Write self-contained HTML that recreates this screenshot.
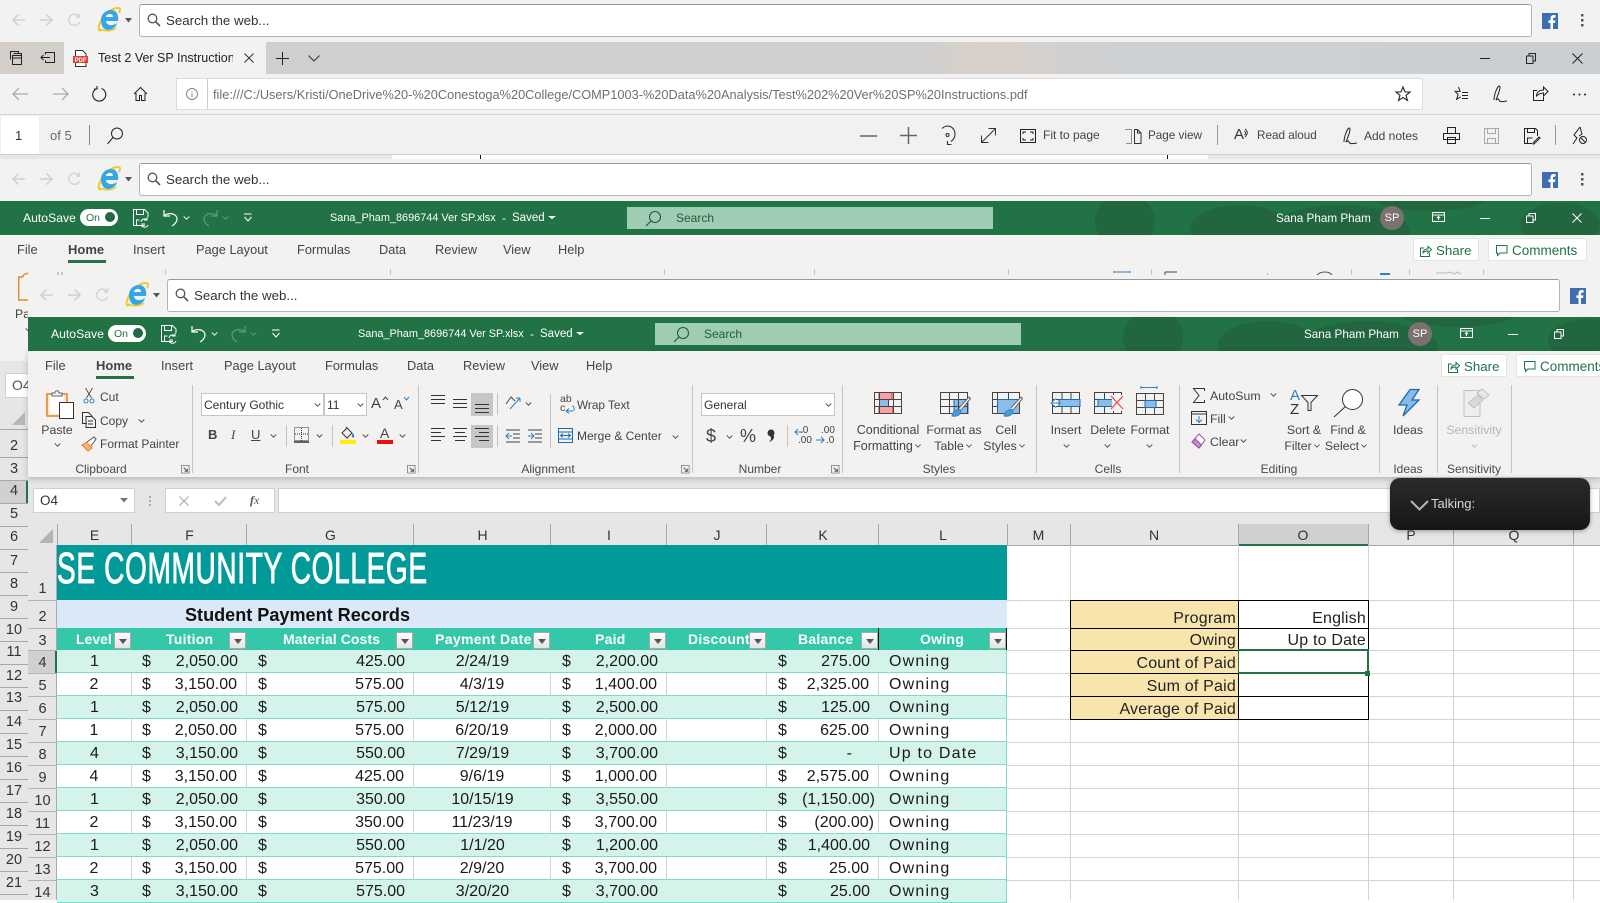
<!DOCTYPE html>
<html lang="en"><head><meta charset="utf-8"><title>Excel</title>
<style>
html,body{margin:0;padding:0;width:1600px;height:900px;overflow:hidden;background:#fff;font-family:"Liberation Sans",sans-serif}
div,span,svg{box-sizing:border-box}
.a{position:absolute}
.t{position:absolute;white-space:nowrap;line-height:20px;height:20px;font-size:12px;color:#444}
.c{transform:translateX(-50%)}
.i{position:absolute;overflow:visible;fill:none;stroke:#444;stroke-width:1}
.w{color:#fff}
.rl{font-size:12.3px}
.g{font-size:12px;color:#4a4a4a}
.ie{position:absolute;height:42px;background:#f2f2f2}
.box{position:absolute;left:139px;top:4px;width:1393px;height:33px;background:#fff;border:1px solid #b4b4b4;border-top-color:#999;border-radius:3px}
.bar{position:absolute;height:34px;background:#217346}
.tab{position:absolute;top:39px;font-size:12.800px;color:#444;line-height:20px;white-space:nowrap}
.btn{position:absolute;top:37px;height:23px;background:#fff;border:1px solid #e4e4e4;border-radius:2px}
.sb{position:absolute;left:627px;top:6px;width:366px;height:22px;background:#9fcdb3}
.div{position:absolute;top:385px;height:88px;width:1px;background:#c4c4c4}
.sm{position:absolute;width:1px;background:#c4c4c4}
.tb{position:absolute;top:650px;left:57px;border-collapse:separate;border-spacing:0;table-layout:fixed;width:950px;font-size:16px;color:#1a1a1a}
.tb td{height:23px;padding:1.5px 0 0;border-bottom:1.5px solid #7fdcc6;position:relative;overflow:hidden;white-space:nowrap;box-sizing:border-box;line-height:20px}
.tb tr.s td{background:#d4f3eb}
.tb tr.n td{border-right:1px solid #d4d4d4}
.tb td:last-child{border-right:1px solid #7fdcc6!important;padding-left:10px;letter-spacing:1.2px}
.tb i{font-style:normal;position:absolute;top:1.5px}
.f i{left:10px}.f{text-align:right;padding-right:9px!important}
.tb td:nth-child(3) i{left:11px}
.k i{left:11px}.k{text-align:right;padding-right:9px!important}
.m{text-align:center}
.hdr{position:absolute;top:628px;height:22px;line-height:22px;font-size:14px;font-weight:bold;color:#fff;white-space:nowrap;letter-spacing:.25px}
.fb{position:absolute;top:632px;width:17px;height:17px;background:linear-gradient(#fdfdfd,#e4e4e4);border:1px solid #a9a9a9}
.fb:after{content:"";position:absolute;left:4px;top:6px;border:4px solid transparent;border-top:5px solid #555;border-bottom:0}
.col{position:absolute;top:525px;height:20px;line-height:20px;font-size:14px;color:#333;text-align:center}
.rn{position:absolute;font-size:14.5px;line-height:20px;height:20px;text-align:center;color:#333}
.pv{position:absolute;left:1070px;top:600px;border-collapse:collapse;table-layout:fixed;width:298px;font-size:16px;color:#222}
.pv td{border:1px solid #000;padding:0 2px 0 0;text-align:right;vertical-align:bottom;box-sizing:border-box;letter-spacing:.2px;line-height:19px}
.pv td:first-child{background:#f8e5ae}
</style></head><body>
<svg width="0" height="0" style="position:absolute">
<symbol id="iel" viewBox="0 0 24 26"><path d="M4 23C1 25 1 21 3 16 6 8 14 1 21 1c3 0 2 3 1 5" fill="none" stroke="#f2c92c" stroke-width="2"/><path d="M4 13c0-6 5-10 10-10 6 0 8 6 7 11H9c0 4 6 6 11 2-1 5-6 7-9 7-5 0-7-5-7-10z" fill="#35a7e6"/><path d="M9 10h7c0-2-1-3-3-3-2 0-4 1-4 3z" fill="#fff"/><path d="M3 22c4 2 11 3 16-1" fill="none" stroke="#f2c92c" stroke-width="1.600"/></symbol>
<symbol id="fb" viewBox="0 0 16 16"><rect width="16" height="16" fill="#3f6eb0"/><path d="M11 16v-6h2l.4-2.600H11V6c0-1 .4-1.400 1.400-1.400h1.200V2.200C13 2 12.300 2 11.700 2 9.800 2 8.500 3.200 8.500 5.400v2H6.400V10h2.100v6z" fill="#fff"/></symbol>
<symbol id="ch" viewBox="0 0 8 5"><path d="M.5.500L4 4 7.500.5" fill="none" stroke="#444" stroke-width="1.100"/></symbol>
<symbol id="chw" viewBox="0 0 8 5"><path d="M.5.500L4 4 7.500.5" fill="none" stroke="#fff" stroke-width="1.100"/></symbol>
<symbol id="chf" viewBox="0 0 8 5"><path d="M.5.500L4 4 7.500.5" fill="none" stroke="#5d9c7a" stroke-width="1.100"/></symbol>
<symbol id="chg" viewBox="0 0 8 5"><path d="M.5.500L4 4 7.500.5" fill="none" stroke="#b5b5b5" stroke-width="1.100"/></symbol>
<symbol id="lau" viewBox="0 0 10 10"><path d="M.5 9V.5h8.500V9H.5" fill="none" stroke="#888"/><path d="M3 3l4 4M7 4v3H4" fill="none" stroke="#444"/></symbol>
<symbol id="sr" viewBox="0 0 14 14"><circle cx="5.500" cy="5.500" r="4.300" fill="none" stroke="#555" stroke-width="1.300"/><path d="M8.800 8.800L13 13" stroke="#555" stroke-width="1.600"/></symbol>
<symbol id="mg" viewBox="0 0 18 18"><circle cx="11" cy="7" r="5.500" fill="none" stroke="#1e5c3a" stroke-width="1.100"/><path d="M7 11L2 16" stroke="#1e5c3a" stroke-width="1.200"/></symbol>
</svg>

<!-- IE bar 1 -->
<div class="ie" style="left:0;top:0;width:1600px">
<svg class="i" style="left:11px;top:13px;stroke:#cfcfcf;stroke-width:1.500" width="15" height="14"><path d="M14 7H2M7.500 1.500L2 7l5.500 5.500"/></svg>
<svg class="i" style="left:39px;top:13px;stroke:#cfcfcf;stroke-width:1.500" width="15" height="14"><path d="M1 7h12M7.500 1.500L13 7l-5.500 5.500"/></svg>
<svg class="i" style="left:67px;top:13px;stroke:#d4d4d4;stroke-width:1.500" width="15" height="14"><path d="M12.500 9A5.600 5.600 0 1 1 11.500 3M12.500 .5v3.500H9"/></svg>
<svg class="i" style="left:97px;top:7px;stroke:none" width="24" height="26"><use href="#iel"/></svg>
<svg class="i" style="left:125px;top:18px;stroke:none;fill:#555" width="7" height="5"><path d="M0 0h7L3.500 4.500z"/></svg>
<div class="box"></div>
<svg class="i" style="left:147px;top:13px;stroke:none" width="14" height="14"><use href="#sr"/></svg>
<div class="t" style="left:166px;top:11px;font-size:13.300px;color:#333">Search the web...</div>
<svg class="i" style="left:1542px;top:13px;stroke:none" width="16" height="16"><use href="#fb"/></svg>
<svg class="i" style="left:1581px;top:14px;stroke:none;fill:#555" width="3" height="14"><rect width="2.500" height="2.500"/><rect y="5" width="2.500" height="2.500"/><rect y="10" width="2.500" height="2.500"/></svg>
</div>

<!-- Edge tab strip -->
<div class="a" style="left:0;top:42px;width:1600px;height:32px;background:linear-gradient(90deg,#d3cec9 0,#cfcfd0 300px,#cdcfd1 900px,#d9d0c9 985px,#cdd0d3 1120px,#cccfd1 100%)"></div>
<div class="a" style="left:64px;top:42px;width:202px;height:32px;background:#f2f2f2"></div>
<svg class="i" style="left:9px;top:50px;stroke:#222" width="15" height="16"><path d="M1.500 9.500V1.500h8v2M4.500 3.500h8v2M3.500 5.500h9v9h-9zM3.500 8h9"/></svg>
<svg class="i" style="left:40px;top:51px;stroke:#222" width="16" height="14"><path d="M5.500 3.500v-2h9v10h-9v-2M1 6.500h9M3.500 4L1 6.500 3.500 9"/></svg>
<svg class="i" style="left:73px;top:50px" width="15" height="17"><path d="M2.500.5h7l3.500 3.500v12.500h-10.500z" fill="#fff" stroke="#333"/><rect x="0" y="6" width="15" height="7" fill="#e04030" stroke="none"/><text x="1.500" y="11.800" font-size="6" font-weight="bold" fill="#fff" stroke="none" font-family="Liberation Sans">PDF</text></svg>
<div class="t" style="left:98px;top:48px;font-size:12.500px;color:#222;width:135px;overflow:hidden">Test 2 Ver SP Instruction</div>
<svg class="i" style="left:244px;top:53px;stroke:#333" width="10" height="10"><path d="M.5.500l9 9M9.500.5l-9 9"/></svg>
<svg class="i" style="left:276px;top:52px;stroke:#222" width="13" height="13"><path d="M6.500 0v13M0 6.500h13"/></svg>
<svg class="i" style="left:308px;top:55px;stroke:#333" width="12" height="7"><path d="M.5.500L6 6l5.500-5.500"/></svg>
<svg class="i" style="left:1480px;top:58px;stroke:#222" width="10" height="1"><path d="M0 .5h10"/></svg>
<svg class="i" style="left:1526px;top:53px;stroke:#222" width="10" height="11"><path d="M.5 3h6.500v7.500H.5zM3 3V.5h6.500V8H7"/></svg>
<svg class="i" style="left:1572px;top:53px;stroke:#222" width="11" height="11"><path d="M.5.500l10 10M10.500.5l-10 10"/></svg>

<!-- Edge address -->
<div class="a" style="left:0;top:74px;width:1600px;height:41px;background:#f2f2f2"></div>
<svg class="i" style="left:12px;top:87px;stroke:#9b9b9b" width="17" height="14"><path d="M16 7H1M7 1L1 7l6 6"/></svg>
<svg class="i" style="left:52px;top:87px;stroke:#9b9b9b" width="17" height="14"><path d="M1 7h15M10 1l6 6-6 6"/></svg>
<svg class="i" style="left:92px;top:86px;stroke:#222;stroke-width:1.100" width="15" height="16"><path d="M9.500 2.500A6.500 6.500 0 1 1 5 2.500M5 0v3H2"/></svg>
<svg class="i" style="left:133px;top:86px;stroke:#222" width="15" height="16"><path d="M1 8l6.500-6.500L14 8M3 7v7.500h3.500v-5h2v5H12V7"/></svg>
<div class="a" style="left:176px;top:78px;width:1247px;height:32px;background:#fff;border:1px solid #dcdcdc"></div>
<svg class="i" style="left:186px;top:88px;stroke:#888" width="12" height="12"><circle cx="6" cy="6" r="5.500"/><path d="M6 5v4M6 3v1"/></svg>
<div class="a" style="left:207px;top:79px;width:1px;height:30px;background:#ccc"></div>
<div class="t" style="left:213px;top:85px;font-size:12.770px;color:#6f6f6f">file:///C:/Users/Kristi/OneDrive%20-%20Conestoga%20College/COMP1003-%20Data%20Analysis/Test%202%20Ver%20SP%20Instructions.pdf</div>
<svg class="i" style="left:1395px;top:86px;stroke:#222;stroke-width:1.100" width="16" height="16"><path d="M8 1l2 5h5l-4 3.300 1.500 5.200L8 11.500 3.500 14.500 5 9.300 1 6h5z"/></svg>
<svg class="i" style="left:1452px;top:86px;stroke:#222" width="17" height="16"><path d="M6.500 1l1.600 4.400h-5l3 3-1.500 5 4-2.600M10 6.500h6M10 9.500h6M10 12.500h6"/></svg>
<svg class="i" style="left:1492px;top:85px;stroke:#222" width="17" height="18"><path d="M2 15c0-5 3-13 5-14 2 0 1 4-3 14M4 15c2-1 2-2 3 0s2 2 8 1"/></svg>
<svg class="i" style="left:1532px;top:85px;stroke:#222" width="17" height="17"><path d="M5 5.500H1.500v10h10V12M4.500 11c0-4 3-6 7-6V2L16 6.500 11.500 11V8c-3 0-5 1-7 3z"/></svg>
<svg class="i" style="left:1572px;top:93px;stroke:none;fill:#222" width="15" height="3"><circle cx="2" cy="1.500" r="1"/><circle cx="7.500" cy="1.500" r="1"/><circle cx="13" cy="1.500" r="1"/></svg>

<!-- PDF toolbar -->
<div class="a" style="left:0;top:114px;width:1600px;height:41px;background:#f1f1f1;border-top:1px solid #d4d4d4;border-bottom:1px solid #cfcfcf"></div>
<div class="a" style="left:1px;top:116px;width:38px;height:38px;background:#fff"></div>
<div class="t" style="left:15px;top:126px;font-size:13px;color:#333">1</div>
<div class="t" style="left:50px;top:126px;font-size:13px;color:#666">of 5</div>
<div class="a" style="left:89px;top:125px;width:1px;height:20px;background:#888"></div>
<svg class="i" style="left:106px;top:127px;stroke:#222" width="18" height="18"><circle cx="11" cy="6.500" r="5.500"/><path d="M7 10.500L1.500 17"/></svg>
<svg class="i" style="left:860px;top:135px;stroke:#666;stroke-width:1.500" width="17" height="2"><path d="M0 1h17"/></svg>
<svg class="i" style="left:900px;top:127px;stroke:#666;stroke-width:1.500" width="17" height="17"><path d="M0 8.500h17M8.500 0v17"/></svg>
<svg class="i" style="left:939px;top:126px;stroke:#333;stroke-width:1.100" width="18" height="19"><path d="M3 2.500A7.500 7.500 0 0 1 16 8c0 4-2 6-4 7.500M8.500 15v3.500h4"/><circle cx="8.500" cy="9" r="1.500"/></svg>
<svg class="i" style="left:980px;top:127px;stroke:#333" width="17" height="17"><path d="M1.500 15.500l14-14M8.500 1.500h7v7M1.500 8.500v7h7"/></svg>
<svg class="i" style="left:1020px;top:129px;stroke:#222" width="16" height="14"><path d="M.5.500h15v13H.5z"/><path d="M3 5V3h3M13 5V3h-3M3 9v2h3M13 9v2h-3"/></svg>
<div class="t" style="left:1043px;top:125px;font-size:12px">Fit to page</div>
<svg class="i" style="left:1125px;top:129px;stroke:#333" width="17" height="15"><path d="M.5.500h6v14h-6" stroke-dasharray="1 1"/><path d="M9.500.5h3l3.500 3.500v10.500H9.500zM12.500.5v3.500h3.500"/></svg>
<div class="t" style="left:1148px;top:126px;font-size:11.700px">Page view</div>
<div class="a" style="left:1217px;top:125px;width:1px;height:20px;background:#999"></div>
<div class="t" style="left:1234px;top:125px;font-size:15px;color:#333">A</div>
<svg class="i" style="left:1244px;top:128px;stroke:#333" width="6" height="10"><path d="M1 1c3 2 3 5 0 8M.5 3c1.500 1 1.500 3 0 4"/></svg>
<div class="t" style="left:1257px;top:126px;font-size:11.700px">Read aloud</div>
<svg class="i" style="left:1342px;top:127px;stroke:#222" width="17" height="18"><path d="M2 15c0-5 3-13 5-14 2 0 1 4-3 14M4 15c2-1 2-2 3 0s2 2 8 1"/></svg>
<div class="t" style="left:1364px;top:126px">Add notes</div>
<svg class="i" style="left:1443px;top:127px;stroke:#222" width="17" height="17"><path d="M4.500 6V.5h8V6M.5 6.500h16v6h-16zM4.500 10.500h8v6h-8z"/></svg>
<svg class="i" style="left:1484px;top:128px;stroke:#a9a9a9" width="15" height="16"><path d="M.5.500h14v15H.5zM3.500.5v5h8v-5M3.500 15.500v-5h8v5"/></svg>
<svg class="i" style="left:1524px;top:128px;stroke:#222" width="16" height="16"><path d="M8 15.500H.5V.5h11l2 2V8M3.500.5v4h7v-4M3.500 15v-5h5"/><path d="M9 15l6-6 1 1-6 6H9z"/></svg>
<div class="a" style="left:1555px;top:125px;width:1px;height:20px;background:#999"></div>
<svg class="i" style="left:1572px;top:126px;stroke:#222" width="16" height="19"><path d="M8 1l-6 8 3 3-4 6M8 1l2 7-3 2"/><circle cx="11" cy="14" r="3.500"/><path d="M9 12l4 4"/></svg>

<div class="a" style="left:0;top:155px;width:1600px;height:5px;background:#e6e6e6"></div>
<div class="a" style="left:392px;top:155px;width:816px;height:5px;background:#fff"></div>
<div class="a" style="left:480px;top:155px;width:1px;height:4px;background:#111"></div>
<div class="a" style="left:1167px;top:155px;width:1px;height:4px;background:#111"></div>

<!-- IE bar 2 -->
<div class="ie" style="left:0;top:159px;width:1600px">
<svg class="i" style="left:11px;top:13px;stroke:#cfcfcf;stroke-width:1.500" width="15" height="14"><path d="M14 7H2M7.500 1.500L2 7l5.500 5.500"/></svg>
<svg class="i" style="left:39px;top:13px;stroke:#cfcfcf;stroke-width:1.500" width="15" height="14"><path d="M1 7h12M7.500 1.500L13 7l-5.500 5.500"/></svg>
<svg class="i" style="left:67px;top:13px;stroke:#d4d4d4;stroke-width:1.500" width="15" height="14"><path d="M12.500 9A5.600 5.600 0 1 1 11.500 3M12.500 .5v3.500H9"/></svg>
<svg class="i" style="left:97px;top:7px;stroke:none" width="24" height="26"><use href="#iel"/></svg>
<svg class="i" style="left:125px;top:18px;stroke:none;fill:#555" width="7" height="5"><path d="M0 0h7L3.500 4.500z"/></svg>
<div class="box"></div>
<svg class="i" style="left:147px;top:13px;stroke:none" width="14" height="14"><use href="#sr"/></svg>
<div class="t" style="left:166px;top:11px;font-size:13.300px;color:#333">Search the web...</div>
<svg class="i" style="left:1542px;top:13px;stroke:none" width="16" height="16"><use href="#fb"/></svg>
<svg class="i" style="left:1581px;top:14px;stroke:none;fill:#555" width="3" height="14"><rect width="2.500" height="2.500"/><rect y="5" width="2.500" height="2.500"/><rect y="10" width="2.500" height="2.500"/></svg>
</div>

<!-- Back Excel -->
<div class="a" style="left:0;top:235px;width:1600px;height:40px;background:#f3f2f1"></div>
<div class="a" style="left:0;top:275px;width:28px;height:87px;background:#f3f2f1"></div>
<div class="bar" style="left:0;top:201px;width:1600px;overflow:hidden">
<svg class="a" style="left:1090px;top:0" width="510" height="34"><g fill="#21663f"><ellipse cx="35" cy="20" rx="30" ry="28"/><ellipse cx="150" cy="28" rx="50" ry="24"/><ellipse cx="250" cy="30" rx="70" ry="26"/><ellipse cx="340" cy="-6" rx="60" ry="16"/><ellipse cx="470" cy="24" rx="40" ry="22"/></g></svg>
<div class="t w" style="left:23px;top:7px;font-size:12.200px">AutoSave</div>
<div class="a" style="left:80px;top:8px;width:38px;height:17px;border-radius:9px;background:#fff"></div>
<div class="t" style="left:86px;top:7px;font-size:10.500px;color:#217346">On</div>
<div class="a" style="left:105px;top:11px;width:10px;height:10px;border-radius:5px;background:#1f6a41"></div>
<svg class="i" style="left:133px;top:8px;stroke:#fff" width="17" height="19"><path d="M12 16.500H.5V.5h11l3.500 3.500v4M3.500.5v5h7v-5M3.500 16v-5h3"/><path d="M8 13a3.500 3.500 0 0 1 6-2M15 16a3.500 3.500 0 0 1-6 1M14 8v3h-3M9 18v-3h3"/></svg>
<svg class="i" style="left:163px;top:8px;stroke:#fff;stroke-width:1.200" width="16" height="18"><path d="M1 1v6h6M1 7c3-4 13-3 13 3 0 3-3 6-5 7"/></svg>
<svg class="i" style="left:183px;top:15px;stroke:none" width="7" height="4"><use href="#chw"/></svg>
<svg class="i" style="left:202px;top:8px;stroke:#5d9c7a;stroke-width:1.200" width="16" height="18"><path d="M15 1v6H9M15 7C12 3 2 4 2 10c0 3 3 6 5 7"/></svg>
<svg class="i" style="left:222px;top:15px;stroke:none" width="7" height="4"><use href="#chf"/></svg>
<svg class="i" style="left:244px;top:12px;stroke:#fff" width="8" height="9"><path d="M0 1h7.500M.5 4L4 8l3.500-4"/></svg>
<div class="t w" style="left:330px;top:7px;font-size:10.900px">Sana_Pham_8696744 Ver SP.xlsx</div>
<div class="t w" style="left:502px;top:7px">-</div>
<div class="t w" style="left:512px;top:7px;font-size:11.500px">Saved</div>
<svg class="i" style="left:549px;top:15px;stroke:#fff;fill:#fff" width="6" height="3"><path d="M.5.500h5L3 2.500z"/></svg>
<div class="sb"></div>
<svg class="i" style="left:644px;top:9px;stroke:none" width="18" height="18"><use href="#mg"/></svg>
<div class="t" style="left:676px;top:7px;color:#1e5c3a">Search</div>
<div class="t w" style="left:1276px;top:8px;font-size:11.700px">Sana Pham Pham</div>
<div class="a" style="left:1380px;top:5px;width:24px;height:24px;border-radius:12px;background:#7b716f;color:#fff;font-size:11px;text-align:center;line-height:24px">SP</div>
<svg class="i" style="left:1432px;top:11px;stroke:#fff" width="13" height="10"><path d="M.5.500h12v9H.5zM.5 3h12M6.500 8V4.500M5 6l1.500-1.500L8 6"/></svg>
<svg class="i" style="left:1480px;top:17px;stroke:#fff" width="10" height="1"><path d="M0 .5h10"/></svg>
<svg class="i" style="left:1526px;top:12px;stroke:#fff" width="10" height="10"><path d="M.5 3h6.500v6.500H.5zM3 3V.5h6.500V7H7"/></svg>
<svg class="i" style="left:1572px;top:12px;stroke:#fff" width="10" height="10"><path d="M.5.500l9 9M9.500.5l-9 9"/></svg>
</div>
<div class="a" style="left:0;top:201px;width:1600px;height:74px">
<div class="tab" style="left:17px">File</div><div class="tab" style="left:68px;font-weight:bold;font-size:13px">Home</div><div class="a" style="left:68px;top:59px;width:38px;height:3px;background:#217346"></div>
<div class="tab" style="left:133px">Insert</div><div class="tab" style="left:196px">Page Layout</div><div class="tab" style="left:297px">Formulas</div><div class="tab" style="left:379px">Data</div><div class="tab" style="left:435px">Review</div><div class="tab" style="left:503px">View</div><div class="tab" style="left:558px">Help</div>
<div class="btn" style="left:1413px;width:66px"></div><div class="btn" style="left:1488px;width:99px"></div>
<svg class="i" style="left:1420px;top:44px;stroke:#217346" width="12" height="12"><path d="M4 3H.5v8.500h9V8M3 8c0-3 2-4 5-4V1.500l3.500 3L8 8V6C6 6 4 6.500 3 8z"/></svg>
<div class="t" style="left:1436px;top:40px;font-size:13.300px;color:#217346">Share</div>
<svg class="i" style="left:1496px;top:44px;stroke:#217346" width="12" height="12"><path d="M.5.500h10.500v7.500H4L1.500 10.500V8h-1z"/></svg>
<div class="t" style="left:1512px;top:40px;font-size:13.500px;color:#217346">Comments</div>
</div>
<!-- back ribbon remnants -->
<div class="sm" style="left:165px;top:269px;height:6px"></div><div class="sm" style="left:390px;top:269px;height:6px"></div><div class="sm" style="left:664px;top:269px;height:6px"></div><div class="sm" style="left:814px;top:269px;height:6px"></div><div class="sm" style="left:1008px;top:269px;height:6px"></div><div class="sm" style="left:1151px;top:269px;height:6px"></div><div class="sm" style="left:1351px;top:269px;height:6px"></div><div class="sm" style="left:1409px;top:269px;height:6px"></div><div class="sm" style="left:1483px;top:269px;height:6px"></div>
<svg class="i" style="left:0;top:0" width="1600" height="280"><path d="M1114 272h16M1114 271v2M1130 271v2" stroke="#2c82c9"/><path d="M1165 272h12M1165 272v3" stroke="#444"/><path d="M1267 274h1" stroke="#2c82c9"/><path d="M1317 275c4-4 12-4 15 0" stroke="#555"/><path d="M1380 274h10" stroke="#2c82c9" stroke-width="2"/><path d="M1436 273h10l5-1 3 2 3-2 4 2" stroke="#bbb"/><path d="M58 272v3M62 272v3" stroke="#999"/></svg>
<svg class="i" style="left:18px;top:273px;stroke:#e8862d;stroke-width:1.400" width="10" height="28"><path d="M10 27H.7V4H5M5 4c0-3 3-3 5-4" /></svg>
<div class="t rl" style="left:15px;top:304px;color:#444">Pa</div>
<svg class="i" style="left:25px;top:328px;stroke:none" width="7" height="4"><use href="#ch"/></svg>

<!-- left strip (back sheet) -->
<div class="a" style="left:0;top:361px;width:28px;height:539px;background:#e6e6e6"></div>
<div class="a" style="left:5px;top:373px;width:26px;height:25px;background:#fff;border:1px solid #d0d0d0"></div>
<div class="t" style="left:12px;top:375px;font-size:14px;color:#555">O4</div>
<svg class="i" style="left:12px;top:412px;stroke:none;fill:#b8b8b8" width="14" height="14"><path d="M13 0v13H0z"/></svg>
<div class="a" style="left:0;top:480px;width:28px;height:23px;background:#d0d0d0;border-right:2px solid #217346"></div>
<svg class="i" style="left:0;top:420px;stroke:#a8a8a8" width="28" height="480"><path d="M0 9.500h28M0 37.500h28M0 60.500h28M0 83.500h28M0 106.500h28M0 129.500h28M0 152.500h28M0 175.500h28M0 198.500h28M0 221.500h28M0 244.500h28M0 267.500h28M0 290.500h28M0 313.500h28M0 336.500h28M0 359.500h28M0 382.500h28M0 405.500h28M0 428.500h28M0 451.500h28M0 474.500h28"/></svg>
<div class="rn" style="left:0;width:28px;top:436px">2</div><div class="rn" style="left:0;width:28px;top:459px">3</div><div class="rn" style="left:0;width:28px;top:481px">4</div><div class="rn" style="left:0;width:28px;top:504px">5</div><div class="rn" style="left:0;width:28px;top:527px">6</div><div class="rn" style="left:0;width:28px;top:551px">7</div><div class="rn" style="left:0;width:28px;top:574px">8</div><div class="rn" style="left:0;width:28px;top:597px">9</div><div class="rn" style="left:0;width:28px;top:620px">10</div><div class="rn" style="left:0;width:28px;top:642px">11</div><div class="rn" style="left:0;width:28px;top:666px">12</div><div class="rn" style="left:0;width:28px;top:688px">13</div><div class="rn" style="left:0;width:28px;top:712px">14</div><div class="rn" style="left:0;width:28px;top:735px">15</div><div class="rn" style="left:0;width:28px;top:758px">16</div><div class="rn" style="left:0;width:28px;top:781px">17</div><div class="rn" style="left:0;width:28px;top:804px">18</div><div class="rn" style="left:0;width:28px;top:827px">19</div><div class="rn" style="left:0;width:28px;top:850px">20</div><div class="rn" style="left:0;width:28px;top:873px">21</div>

<!-- IE bar 3 -->
<div class="ie" style="left:28px;top:275px;width:1572px">
<svg class="i" style="left:11px;top:13px;stroke:#cfcfcf;stroke-width:1.500" width="15" height="14"><path d="M14 7H2M7.500 1.500L2 7l5.500 5.500"/></svg>
<svg class="i" style="left:39px;top:13px;stroke:#cfcfcf;stroke-width:1.500" width="15" height="14"><path d="M1 7h12M7.500 1.500L13 7l-5.500 5.500"/></svg>
<svg class="i" style="left:67px;top:13px;stroke:#d4d4d4;stroke-width:1.500" width="15" height="14"><path d="M12.500 9A5.600 5.600 0 1 1 11.500 3M12.500 .5v3.500H9"/></svg>
<svg class="i" style="left:97px;top:7px;stroke:none" width="24" height="26"><use href="#iel"/></svg>
<svg class="i" style="left:125px;top:18px;stroke:none;fill:#555" width="7" height="5"><path d="M0 0h7L3.500 4.500z"/></svg>
<div class="box"></div>
<svg class="i" style="left:147px;top:13px;stroke:none" width="14" height="14"><use href="#sr"/></svg>
<div class="t" style="left:166px;top:11px;font-size:13.300px;color:#333">Search the web...</div>
<svg class="i" style="left:1542px;top:13px;stroke:none" width="16" height="16"><use href="#fb"/></svg>
</div>

<!-- Front Excel title -->
<div class="bar" style="left:28px;top:317px;width:1572px;overflow:hidden">
<svg class="a" style="left:1090px;top:0" width="510" height="34"><g fill="#21663f"><ellipse cx="35" cy="20" rx="30" ry="28"/><ellipse cx="150" cy="28" rx="50" ry="24"/><ellipse cx="250" cy="30" rx="70" ry="26"/><ellipse cx="340" cy="-6" rx="60" ry="16"/><ellipse cx="470" cy="24" rx="40" ry="22"/></g></svg>
<div class="t w" style="left:23px;top:7px;font-size:12.200px">AutoSave</div>
<div class="a" style="left:80px;top:8px;width:38px;height:17px;border-radius:9px;background:#fff"></div>
<div class="t" style="left:86px;top:7px;font-size:10.500px;color:#217346">On</div>
<div class="a" style="left:105px;top:11px;width:10px;height:10px;border-radius:5px;background:#1f6a41"></div>
<svg class="i" style="left:133px;top:8px;stroke:#fff" width="17" height="19"><path d="M12 16.500H.5V.5h11l3.500 3.500v4M3.500.5v5h7v-5M3.500 16v-5h3"/><path d="M8 13a3.500 3.500 0 0 1 6-2M15 16a3.500 3.500 0 0 1-6 1M14 8v3h-3M9 18v-3h3"/></svg>
<svg class="i" style="left:163px;top:8px;stroke:#fff;stroke-width:1.200" width="16" height="18"><path d="M1 1v6h6M1 7c3-4 13-3 13 3 0 3-3 6-5 7"/></svg>
<svg class="i" style="left:183px;top:15px;stroke:none" width="7" height="4"><use href="#chw"/></svg>
<svg class="i" style="left:202px;top:8px;stroke:#5d9c7a;stroke-width:1.200" width="16" height="18"><path d="M15 1v6H9M15 7C12 3 2 4 2 10c0 3 3 6 5 7"/></svg>
<svg class="i" style="left:222px;top:15px;stroke:none" width="7" height="4"><use href="#chf"/></svg>
<svg class="i" style="left:244px;top:12px;stroke:#fff" width="8" height="9"><path d="M0 1h7.500M.5 4L4 8l3.500-4"/></svg>
<div class="t w" style="left:330px;top:7px;font-size:10.900px">Sana_Pham_8696744 Ver SP.xlsx</div>
<div class="t w" style="left:502px;top:7px">-</div>
<div class="t w" style="left:512px;top:7px;font-size:11.500px">Saved</div>
<svg class="i" style="left:549px;top:15px;stroke:#fff;fill:#fff" width="6" height="3"><path d="M.5.500h5L3 2.500z"/></svg>
<div class="sb"></div>
<svg class="i" style="left:644px;top:9px;stroke:none" width="18" height="18"><use href="#mg"/></svg>
<div class="t" style="left:676px;top:7px;color:#1e5c3a">Search</div>
<div class="t w" style="left:1276px;top:8px;font-size:11.700px">Sana Pham Pham</div>
<div class="a" style="left:1380px;top:5px;width:24px;height:24px;border-radius:12px;background:#7b716f;color:#fff;font-size:11px;text-align:center;line-height:24px">SP</div>
<svg class="i" style="left:1432px;top:11px;stroke:#fff" width="13" height="10"><path d="M.5.500h12v9H.5zM.5 3h12M6.500 8V4.500M5 6l1.500-1.500L8 6"/></svg>
<svg class="i" style="left:1480px;top:17px;stroke:#fff" width="10" height="1"><path d="M0 .5h10"/></svg>
<svg class="i" style="left:1526px;top:12px;stroke:#fff" width="10" height="10"><path d="M.5 3h6.500v6.500H.5zM3 3V.5h6.500V7H7"/></svg>
</div>

<!-- Front ribbon -->
<div class="a" style="left:28px;top:351px;width:1572px;height:126px;background:#f3f2f1;box-shadow:0 2px 6px rgba(0,0,0,.22);z-index:2"></div>
<div class="a" style="left:0;top:0;width:1600px;height:900px;z-index:3">
<div class="a" style="left:28px;top:317px;width:1572px;height:74px;overflow:hidden">
<div class="tab" style="left:17px">File</div><div class="tab" style="left:68px;font-weight:bold;font-size:13px">Home</div><div class="a" style="left:68px;top:59px;width:38px;height:3px;background:#217346"></div>
<div class="tab" style="left:133px">Insert</div><div class="tab" style="left:196px">Page Layout</div><div class="tab" style="left:297px">Formulas</div><div class="tab" style="left:379px">Data</div><div class="tab" style="left:435px">Review</div><div class="tab" style="left:503px">View</div><div class="tab" style="left:558px">Help</div>
<div class="btn" style="left:1413px;width:66px"></div><div class="btn" style="left:1488px;width:99px"></div>
<svg class="i" style="left:1420px;top:44px;stroke:#217346" width="12" height="12"><path d="M4 3H.5v8.500h9V8M3 8c0-3 2-4 5-4V1.500l3.500 3L8 8V6C6 6 4 6.500 3 8z"/></svg>
<div class="t" style="left:1436px;top:40px;font-size:13.300px;color:#217346">Share</div>
<svg class="i" style="left:1496px;top:44px;stroke:#217346" width="12" height="12"><path d="M.5.500h10.500v7.500H4L1.500 10.500V8h-1z"/></svg>
<div class="t" style="left:1512px;top:40px;font-size:13.500px;color:#217346">Comments</div>
</div>

<div class="div" style="left:192px"></div><div class="div" style="left:418px"></div><div class="div" style="left:692px"></div><div class="div" style="left:842px"></div><div class="div" style="left:1036px"></div><div class="div" style="left:1179px"></div><div class="div" style="left:1379px"></div><div class="div" style="left:1437px"></div><div class="div" style="left:1511px"></div>
<div class="t g c" style="left:101px;top:459px">Clipboard</div><div class="t g c" style="left:297px;top:459px">Font</div><div class="t g c" style="left:548px;top:459px">Alignment</div><div class="t g c" style="left:760px;top:459px">Number</div><div class="t g c" style="left:939px;top:459px">Styles</div><div class="t g c" style="left:1108px;top:459px">Cells</div><div class="t g c" style="left:1279px;top:459px">Editing</div><div class="t g c" style="left:1408px;top:459px">Ideas</div><div class="t g c" style="left:1474px;top:459px">Sensitivity</div>
<svg class="i" style="left:181px;top:465px;stroke:none" width="9" height="9"><use href="#lau"/></svg><svg class="i" style="left:407px;top:465px;stroke:none" width="9" height="9"><use href="#lau"/></svg><svg class="i" style="left:681px;top:465px;stroke:none" width="9" height="9"><use href="#lau"/></svg><svg class="i" style="left:831px;top:465px;stroke:none" width="9" height="9"><use href="#lau"/></svg>

<!-- Clipboard -->
<svg class="i" style="left:46px;top:389px" width="28" height="30"><rect x="1" y="5" width="20" height="22" fill="#fbe8d2" stroke="#e8862d" stroke-width="1.600"/><rect x="4" y="6" width="14" height="19" fill="#fff" stroke="none"/><path d="M6 7V4h3c0-3 4-3 4 0h3v3z" fill="#f3f2f1" stroke="#666"/><rect x="13.500" y="13.500" width="14" height="16" fill="#fff" stroke="#333"/></svg>
<div class="t rl c" style="left:57px;top:420px">Paste</div>
<svg class="i" style="left:54px;top:443px;stroke:none" width="7" height="4"><use href="#ch"/></svg>
<svg class="i" style="left:84px;top:388px" width="10" height="16"><path d="M1.500 0l6 10M8.500 0l-6 10" stroke="#555"/><circle cx="2" cy="13" r="2" stroke="#2c82c9"/><circle cx="8" cy="13" r="2" stroke="#2c82c9"/></svg>
<div class="t" style="left:100px;top:387px">Cut</div>
<svg class="i" style="left:82px;top:412px;stroke:#333" width="14" height="16"><path d="M5 11.500H.5V.5h6L10 4M4 4.500h6l3.500 3.500v7.500H4zM6 9h5M6 12h5"/></svg>
<div class="t" style="left:100px;top:411px">Copy</div>
<svg class="i" style="left:138px;top:419px;stroke:none" width="7" height="4"><use href="#ch"/></svg>
<svg class="i" style="left:81px;top:436px" width="16" height="16"><path d="M1 9l5-3 5 6-4 3z" fill="#f7b66b" stroke="#e8762d"/><path d="M6 6l7-5 2 2-5 7" fill="#fff" stroke="#555"/></svg>
<div class="t" style="left:100px;top:434px">Format Painter</div>

<!-- Font -->
<div class="a" style="left:201px;top:393px;width:123px;height:23px;background:#fff;border:1px solid #c6c6c6"></div>
<div class="t" style="left:204px;top:395px;color:#333">Century Gothic</div>
<svg class="i" style="left:314px;top:403px;stroke:none" width="7" height="4"><use href="#ch"/></svg>
<div class="a" style="left:324px;top:393px;width:43px;height:23px;background:#fff;border:1px solid #c6c6c6"></div>
<div class="t" style="left:327px;top:395px;color:#333">11</div>
<svg class="i" style="left:357px;top:403px;stroke:none" width="7" height="4"><use href="#ch"/></svg>
<div class="t" style="left:371px;top:394px;font-size:15px">A</div><svg class="i" style="left:383px;top:397px" width="5" height="3"><path d="M0 3l2.500-3L5 3"/></svg>
<div class="t" style="left:394px;top:395px;font-size:13px">A</div><svg class="i" style="left:404px;top:397px;stroke:#2c82c9" width="5" height="3"><path d="M0 0l2.500 3L5 0"/></svg>
<div class="t" style="left:208px;top:425px;font-size:13px;font-weight:bold">B</div>
<div class="t" style="left:231px;top:425px;font-size:13px;font-style:italic;font-family:'Liberation Serif',serif">I</div>
<div class="t" style="left:251px;top:425px;font-size:13px;text-decoration:underline">U</div>
<svg class="i" style="left:270px;top:434px;stroke:none" width="7" height="4"><use href="#ch"/></svg>
<div class="sm" style="left:286px;top:425px;height:22px"></div>
<svg class="i" style="left:294px;top:427px;stroke:#333" width="15" height="16"><path d="M.5.500h14v13H.5z" stroke-dasharray="1 1"/><path d="M7.500 1v13M1 7h13" stroke-dasharray="1 1"/><path d="M0 15h15" stroke-width="1.500"/></svg>
<svg class="i" style="left:316px;top:434px;stroke:none" width="7" height="4"><use href="#ch"/></svg>
<div class="sm" style="left:332px;top:425px;height:22px"></div>
<svg class="i" style="left:341px;top:426px;stroke:#333" width="14" height="14"><path d="M1 7l5-5 5 5-5 5zM5 1l1 1"/><path d="M12 8c1 2 1 3 0 3s-1-1 0-3z" fill="#2c82c9" stroke="#2c82c9"/></svg>
<div class="a" style="left:340px;top:440px;width:16px;height:4px;background:#ffee00"></div>
<svg class="i" style="left:362px;top:434px;stroke:none" width="7" height="4"><use href="#ch"/></svg>
<div class="t" style="left:380px;top:423px;font-size:14px">A</div>
<div class="a" style="left:377px;top:440px;width:16px;height:4px;background:#e81010"></div>
<svg class="i" style="left:399px;top:434px;stroke:none" width="7" height="4"><use href="#ch"/></svg>

<!-- Alignment -->
<div class="a" style="left:471px;top:393px;width:22px;height:23px;background:#c6c6c6"></div>
<div class="a" style="left:471px;top:425px;width:22px;height:23px;background:#c6c6c6"></div>
<svg class="i" style="left:431px;top:395px;stroke:#333" width="64" height="20"><path d="M0 .5h14M0 4.500h14M0 8.500h14M22 4.500h14M22 8.500h14M22 12.500h14M44 9.500h14M44 13.500h14M44 17.500h14"/></svg>
<svg class="i" style="left:431px;top:428px;stroke:#333" width="64" height="20"><path d="M0 .5h14M0 4.500h10M0 8.500h14M0 12.500h10M22 .5h14M24 4.500h10M22 8.500h14M24 12.500h10M44 .5h14M48 4.500h10M44 8.500h14M48 12.500h10"/></svg>
<div class="sm" style="left:497px;top:393px;height:22px"></div><div class="sm" style="left:497px;top:425px;height:22px"></div>
<svg class="i" style="left:505px;top:394px" width="16" height="16"><path d="M1 10l5-7 4 4" stroke="#444"/><path d="M5 15L15 4M15 4h-4M15 4v4" stroke="#2c82c9"/></svg>
<svg class="i" style="left:525px;top:402px;stroke:none" width="7" height="4"><use href="#ch"/></svg>
<svg class="i" style="left:506px;top:429px" width="37" height="14"><path d="M0 1h14M0 13h14M7 5h7M7 9h7" stroke="#444"/><path d="M6 7H0M3 4L0 7l3 3" stroke="#2c82c9"/><path d="M22 1h14M22 13h14M29 5h7M29 9h7" stroke="#444"/><path d="M22 7h6M25 4l3 3-3 3" stroke="#2c82c9"/></svg>
<div class="sm" style="left:550px;top:394px;height:54px"></div>
<div class="t" style="left:560px;top:394px;font-size:10.500px;color:#444;line-height:10px;height:10px">ab</div><div class="t" style="left:560px;top:403px;font-size:10.500px;color:#444;line-height:10px;height:10px">c</div>
<svg class="i" style="left:566px;top:404px;stroke:#2c82c9" width="9" height="10"><path d="M0 7h6c3 0 3-5 0-5M3 4.500L0 7l3 2.500"/></svg>
<div class="t" style="left:577px;top:395px;font-size:11.800px">Wrap Text</div>
<svg class="i" style="left:558px;top:428px;stroke:#1a6db0" width="15" height="15"><path d="M.5.500h14v14H.5zM.5 4h14M.5 11h14"/><path d="M2.500 7.500h10M5 5.500l-2.500 2L5 9.500M10 5.500l2.500 2-2.500 2"/></svg>
<div class="t" style="left:577px;top:426px">Merge &amp; Center</div>
<svg class="i" style="left:672px;top:435px;stroke:none" width="7" height="4"><use href="#ch"/></svg>

<!-- Number -->
<div class="a" style="left:701px;top:393px;width:134px;height:23px;background:#fff;border:1px solid #c6c6c6"></div>
<div class="t" style="left:704px;top:395px;color:#333">General</div>
<svg class="i" style="left:825px;top:403px;stroke:none" width="7" height="4"><use href="#ch"/></svg>
<div class="t" style="left:706px;top:426px;font-size:18px">$</div>
<svg class="i" style="left:726px;top:435px;stroke:none" width="7" height="4"><use href="#ch"/></svg>
<div class="t" style="left:740px;top:426px;font-size:18px">%</div>
<svg class="i" style="left:767px;top:429px;stroke:none;fill:#333" width="8" height="13"><circle cx="4" cy="4" r="3.500"/><path d="M5 6c2 0 2 1 2 2 0 2-2 4-5 5 2-2 3-4 1-6z"/></svg>
<div class="sm" style="left:787px;top:425px;height:22px"></div>
<div class="t" style="left:800px;top:421px;font-size:10px">.0</div><div class="t" style="left:798px;top:431px;font-size:10px">.00</div>
<svg class="i" style="left:794px;top:428px;stroke:#2c82c9" width="9" height="8"><path d="M9 4H1M4 1L1 4l3 3"/></svg>
<div class="t" style="left:821px;top:421px;font-size:10px">.00</div><div class="t" style="left:826px;top:431px;font-size:10px">.0</div>
<svg class="i" style="left:816px;top:436px;stroke:#2c82c9" width="9" height="8"><path d="M0 4h8M5 1l3 3-3 3"/></svg>

<!-- Styles -->
<svg class="i" style="left:874px;top:392px;stroke:#444" width="28" height="22"><path d="M5 .5h13v7H5zM5 14.500h14v7H5z" fill="#f9a0a5" stroke="#d62828"/><rect x="6" y="8" width="8" height="6" fill="#89bdea" stroke="none"/><path d="M.5.500h27v21H.5zM.5 7.500h27M.5 14.500h27M5.500.5v21M14.500 7v8M19.500 .5v21"/></svg>
<svg class="i" style="left:940px;top:392px;stroke:#444" width="31" height="27"><path d="M14 7.500h14v14H14z" fill="#89bdea" stroke="#1a6db0"/><path d="M.5.500h27v21H.5zM.5 7.500h27M.5 14.500h27M9.500.5v21M18.500.5v21"/><path d="M19 16L29 5l1.500 1.500-9 11" fill="#fff" stroke="#666"/><path d="M12 24c1-5 5-7 9-6 0 4-3 7-9 6z" fill="#4a9ad8" stroke="#2c82c9"/></svg>
<svg class="i" style="left:992px;top:392px;stroke:#444" width="31" height="27"><path d="M5.500 7.500h22v14h-22z" fill="#89bdea" stroke="#1a6db0"/><path d="M.5.500h27v21H.5zM.5 7.500h5M.5 14.500h5M5.500.5v7M16.500.5v7"/><path d="M19 16L29 5l1.500 1.500-9 11" fill="#fff" stroke="#666"/><path d="M12 24c1-5 5-7 9-6 0 4-3 7-9 6z" fill="#4a9ad8" stroke="#2c82c9"/></svg>
<div class="t c" style="left:888px;top:420px;font-size:12.500px">Conditional</div>
<div class="t c" style="left:883px;top:436px;font-size:12.500px">Formatting</div><svg class="i" style="left:915px;top:444px;stroke:none" width="6" height="4"><use href="#ch"/></svg>
<div class="t rl c" style="left:954px;top:420px">Format as</div>
<div class="t rl c" style="left:949px;top:436px">Table</div><svg class="i" style="left:966px;top:444px;stroke:none" width="6" height="4"><use href="#ch"/></svg>
<div class="t rl c" style="left:1006px;top:420px">Cell</div>
<div class="t rl c" style="left:1000px;top:436px">Styles</div><svg class="i" style="left:1019px;top:444px;stroke:none" width="6" height="4"><use href="#ch"/></svg>

<!-- Cells -->
<svg class="i" style="left:1050px;top:392px;stroke:#444" width="32" height="22"><path d="M2.500.5h27v21h-27zM2.500 7.500h27M2.500 14.500h27M12 .5v21M21 .5v21"/><path d="M9 7.500h21v7H9z" fill="#89bdea" stroke="#1a6db0"/><path d="M11 11H2M6 6.500L1 11l5 4.500" stroke="#2c82c9" fill="#fff"/></svg>
<svg class="i" style="left:1094px;top:392px;stroke:#444" width="30" height="22"><path d="M.5.500h27v21H.5zM.5 7.500h27M.5 14.500h27M10.500 .5v21M19.500 .5v21"/><path d="M4 7.500h15v7H4z" fill="#89bdea" stroke="#1a6db0"/><rect x="18" y="3" width="12" height="16" fill="#f3f2f1" stroke="none"/><path d="M17 4l12 13M29 4L17 17" stroke="#ea4a4a" stroke-width="1.200"/></svg>
<svg class="i" style="left:1136px;top:386px;stroke:#444" width="28" height="29"><path d="M5 1.500h16M5 0v3M21 0v3" stroke="#2c82c9"/><path d="M.5 7.500h27v21H.5zM.5 14.500h27M.5 21.500h27M9.500 7.500v21M18.500 7.500v21"/><path d="M9 14.500h11v7H9z" fill="#89bdea" stroke="#1a6db0"/></svg>
<div class="t rl c" style="left:1066px;top:420px">Insert</div><svg class="i" style="left:1063px;top:444px;stroke:none" width="7" height="4"><use href="#ch"/></svg>
<div class="t rl c" style="left:1108px;top:420px">Delete</div><svg class="i" style="left:1104px;top:444px;stroke:none" width="7" height="4"><use href="#ch"/></svg>
<div class="t rl c" style="left:1150px;top:420px">Format</div><svg class="i" style="left:1146px;top:444px;stroke:none" width="7" height="4"><use href="#ch"/></svg>

<!-- Editing -->
<svg class="i" style="left:1193px;top:388px;stroke:#333" width="12" height="15"><path d="M11.500 3V.5H.5L6 7.500.5 14.500h11V12"/></svg>
<div class="t" style="left:1210px;top:386px;font-size:12.300px">AutoSum</div>
<svg class="i" style="left:1270px;top:393px;stroke:none" width="7" height="4"><use href="#ch"/></svg>
<svg class="i" style="left:1191px;top:411px;stroke:#333" width="16" height="14"><path d="M.5.500h15v13H.5zM.5 3h15"/><path d="M8 5v6M5 8.500L8 11.500l3-3" stroke="#2c82c9"/></svg>
<div class="t" style="left:1210px;top:409px;font-size:12.300px">Fill</div>
<svg class="i" style="left:1228px;top:416px;stroke:none" width="7" height="4"><use href="#ch"/></svg>
<svg class="i" style="left:1191px;top:433px" width="15" height="16"><path d="M8 1l6 6-6 8-7-6z" fill="#fff" stroke="#9b4fb0"/><path d="M4.500 6l6 6-2.500 3-7-6z" fill="#c88ad4" stroke="#9b4fb0"/></svg>
<div class="t" style="left:1210px;top:432px;font-size:12.300px">Clear</div>
<svg class="i" style="left:1240px;top:439px;stroke:none" width="7" height="4"><use href="#ch"/></svg>
<div class="t" style="left:1290px;top:388px;font-size:15px;color:#2c82c9;line-height:15px;height:15px">A</div>
<div class="t" style="left:1290px;top:402px;font-size:15px;color:#333;line-height:15px;height:15px">Z</div>
<svg class="i" style="left:1301px;top:395px;stroke:#333" width="17" height="16"><path d="M.5.500h16L10 7.500v8H7v-8z"/></svg>
<svg class="i" style="left:1333px;top:389px;stroke:#333" width="30" height="30"><circle cx="19.500" cy="10.500" r="10" fill="#fff"/><path d="M12.500 17.500L1 28"/></svg>
<div class="t rl c" style="left:1304px;top:420px">Sort &amp;</div>
<div class="t rl c" style="left:1298px;top:436px">Filter</div><svg class="i" style="left:1314px;top:444px;stroke:none" width="6" height="4"><use href="#ch"/></svg>
<div class="t rl c" style="left:1348px;top:420px">Find &amp;</div>
<div class="t rl c" style="left:1342px;top:436px">Select</div><svg class="i" style="left:1361px;top:444px;stroke:none" width="6" height="4"><use href="#ch"/></svg>

<!-- Ideas/Sensitivity -->
<svg class="i" style="left:1398px;top:389px" width="22" height="28"><path d="M12 .5h9L14 11h7L5 27l4-11H1z" fill="#85bcec" stroke="#1a6db0" stroke-width="1.300"/></svg>
<div class="t rl c" style="left:1408px;top:420px">Ideas</div>
<svg class="i" style="left:1463px;top:387px;stroke:#c0c0c0" width="27" height="31"><path d="M1 3.500h16v26H1z" fill="#efeeed"/><path d="M5 16L15 8l5 5-9 8z" fill="#d8d8d8"/><path d="M14 6l5-4 7 6-5 4z" fill="#e8e8e8"/></svg>
<div class="t rl c" style="left:1474px;top:420px;color:#b5b5b5">Sensitivity</div>
<svg class="i" style="left:1471px;top:444px;stroke:none" width="7" height="4"><use href="#chg"/></svg>
</div>

<!-- Formula bar area -->
<div class="a" style="left:28px;top:477px;width:1572px;height:68px;background:#e6e6e6"></div>
<div class="a" style="left:33px;top:488px;width:102px;height:25px;background:#fff;border:1px solid #d0d0d0"></div>
<div class="t" style="left:40px;top:491px;font-size:13.500px;color:#333">O4</div>
<svg class="i" style="left:120px;top:498px;stroke:none;fill:#777" width="8" height="5"><path d="M0 0h8L4 4.500z"/></svg>
<svg class="i" style="left:149px;top:496px;stroke:none;fill:#aaa" width="2" height="11"><rect width="2" height="2"/><rect y="4" width="2" height="2"/><rect y="8" width="2" height="2"/></svg>
<div class="a" style="left:165px;top:488px;width:110px;height:25px;background:#fff;border:1px solid #d0d0d0"></div>
<svg class="i" style="left:179px;top:496px;stroke:#bbb;stroke-width:1.500" width="10" height="10"><path d="M.5.500l9 9M9.500.5l-9 9"/></svg>
<svg class="i" style="left:214px;top:496px;stroke:#bbb;stroke-width:2" width="13" height="10"><path d="M1 5l4 4 7-8"/></svg>
<div class="t" style="left:250px;top:490px;font-size:12px;font-style:italic;font-family:'Liberation Serif',serif;color:#555"><b>f</b>x</div>
<div class="a" style="left:278px;top:488px;width:1322px;height:25px;background:#fff;border:1px solid #d0d0d0"></div>

<!-- Column headers -->
<svg class="i" style="left:39px;top:529px;stroke:none;fill:#b4b4b4" width="14" height="14"><path d="M14 0v14H0z"/></svg>
<div class="col" style="left:57px;width:75px">E</div><div class="col" style="left:132px;width:115px">F</div><div class="col" style="left:247px;width:167px">G</div><div class="col" style="left:414px;width:137px">H</div><div class="col" style="left:551px;width:116px">I</div><div class="col" style="left:667px;width:100px">J</div><div class="col" style="left:767px;width:112px">K</div><div class="col" style="left:879px;width:128px">L</div><div class="col" style="left:1007px;width:63px">M</div><div class="col" style="left:1070px;width:168px">N</div>
<div class="a" style="left:1238px;top:524px;width:130px;height:22px;background:#d0d0d0;border-bottom:2px solid #217346"></div>
<div class="col" style="left:1238px;width:130px">O</div><div class="col" style="left:1368px;width:86px">P</div><div class="col" style="left:1454px;width:120px">Q</div>
<svg class="i" style="left:0;top:524px;stroke:#a8a8a8" width="1600" height="22"><path d="M28 21.500h1210M1368 21.500h232M57.500 0v22M131.500 0v22M246.500 0v22M413.500 0v22M550.500 0v22M666.500 0v22M766.500 0v22M878.500 0v22M1007.500 0v22M1070.500 0v22M1238.500 0v22M1368.500 0v22M1453.500 0v22M1573.500 0v22"/></svg>

<!-- Row header column -->
<div class="a" style="left:28px;top:545px;width:29px;height:355px;background:#e6e6e6;border-right:1px solid #aaa"></div>
<div class="a" style="left:28px;top:650px;width:29px;height:23px;background:#d0d0d0;border-right:2px solid #217346"></div>
<svg class="i" style="left:28px;top:590px;stroke:#b5b5b5" width="29" height="310"><path d="M0 10.500h29M0 38.500h29M0 60.500h29M0 83.500h29M0 106.500h29M0 129.500h29M0 152.500h29M0 175.500h29M0 198.500h29M0 221.500h29M0 244.500h29M0 267.500h29M0 290.500h29"/></svg>
<div class="rn" style="left:28px;width:29px;top:579px">1</div><div class="rn" style="left:28px;width:29px;top:607px">2</div><div class="rn" style="left:28px;width:29px;top:631px">3</div><div class="rn" style="left:28px;width:29px;top:653px">4</div><div class="rn" style="left:28px;width:29px;top:676px">5</div><div class="rn" style="left:28px;width:29px;top:699px">6</div><div class="rn" style="left:28px;width:29px;top:722px">7</div><div class="rn" style="left:28px;width:29px;top:745px">8</div><div class="rn" style="left:28px;width:29px;top:768px">9</div><div class="rn" style="left:28px;width:29px;top:791px">10</div><div class="rn" style="left:28px;width:29px;top:814px">11</div><div class="rn" style="left:28px;width:29px;top:837px">12</div><div class="rn" style="left:28px;width:29px;top:860px">13</div><div class="rn" style="left:28px;width:29px;top:883px">14</div>

<!-- Grid right -->
<svg class="i" style="left:1007px;top:545px;stroke:#d4d4d4" width="593" height="355"><path d="M0 55.500h593M0 83.500h593M0 105.500h593M0 128.500h593M0 151.500h593M0 174.500h593M0 197.500h593M0 220.500h593M0 243.500h593M0 266.500h593M0 289.500h593M0 312.500h593M0 335.500h593M63.500 0v355M231.500 0v355M361.500 0v355M446.500 0v355M566.500 0v355"/></svg>

<!-- Sheet banners -->
<div class="a" style="left:57px;top:545px;width:950px;height:55px;background:#029999;overflow:hidden">
<div class="a" style="left:0;top:2px;white-space:nowrap;color:#fff;font-size:44px;line-height:44px;transform-origin:0 0;transform:scaleX(.6375);letter-spacing:1px;-webkit-text-stroke:1px #fff">SE COMMUNITY COLLEGE</div>
</div>
<div class="a" style="left:57px;top:600px;width:950px;height:28px;background:#dae8f7"></div>
<div class="t" style="left:185px;top:605px;font-size:18.080px;font-weight:bold;color:#111">Student Payment Records</div>
<div class="a" style="left:57px;top:628px;width:950px;height:22px;background:#34c8a9"></div>
<div class="hdr" style="left:76px;letter-spacing:0">Level</div><div class="hdr" style="left:166px">Tuition</div><div class="hdr" style="left:283px;letter-spacing:.1px">Material Costs</div><div class="hdr" style="left:435px;letter-spacing:.35px">Payment Date</div><div class="hdr" style="left:595px">Paid</div><div class="hdr" style="left:688px">Discount</div><div class="hdr" style="left:798px">Balance</div><div class="hdr" style="left:920px">Owing</div>
<div class="fb" style="left:114px"></div><div class="fb" style="left:229px"></div><div class="fb" style="left:396px"></div><div class="fb" style="left:533px"></div><div class="fb" style="left:649px"></div><div class="fb" style="left:749px"></div><div class="fb" style="left:861px"></div><div class="fb" style="left:989px"></div>
<div class="a" style="left:878px;top:628px;width:1px;height:22px;background:#111"></div><div class="a" style="left:1006px;top:628px;width:1px;height:22px;background:#111"></div>

<table class="tb"><colgroup><col style="width:75px"><col style="width:115px"><col style="width:167px"><col style="width:137px"><col style="width:116px"><col style="width:100px"><col style="width:112px"><col style="width:128px"></colgroup>
<tr class="s"><td class="m">1</td><td class="f"><i>$</i>2,050.00</td><td class="f"><i>$</i>425.00</td><td class="m">2/24/19</td><td class="k"><i>$</i>2,200.00</td><td></td><td class="k"><i>$</i>275.00</td><td>Owning</td></tr>
<tr class="n"><td class="m">2</td><td class="f"><i>$</i>3,150.00</td><td class="f"><i>$</i>575.00</td><td class="m">4/3/19</td><td class="k"><i>$</i>1,400.00</td><td></td><td class="k"><i>$</i>2,325.00</td><td>Owning</td></tr>
<tr class="s"><td class="m">1</td><td class="f"><i>$</i>2,050.00</td><td class="f"><i>$</i>575.00</td><td class="m">5/12/19</td><td class="k"><i>$</i>2,500.00</td><td></td><td class="k"><i>$</i>125.00</td><td>Owning</td></tr>
<tr class="n"><td class="m">1</td><td class="f"><i>$</i>2,050.00</td><td class="f"><i>$</i>575.00</td><td class="m">6/20/19</td><td class="k"><i>$</i>2,000.00</td><td></td><td class="k"><i>$</i>625.00</td><td>Owning</td></tr>
<tr class="s"><td class="m">4</td><td class="f"><i>$</i>3,150.00</td><td class="f"><i>$</i>550.00</td><td class="m">7/29/19</td><td class="k"><i>$</i>3,700.00</td><td></td><td class="k" style="padding-right:27px!important"><i>$</i>-</td><td>Up to Date</td></tr>
<tr class="n"><td class="m">4</td><td class="f"><i>$</i>3,150.00</td><td class="f"><i>$</i>425.00</td><td class="m">9/6/19</td><td class="k"><i>$</i>1,000.00</td><td></td><td class="k"><i>$</i>2,575.00</td><td>Owning</td></tr>
<tr class="s"><td class="m">1</td><td class="f"><i>$</i>2,050.00</td><td class="f"><i>$</i>350.00</td><td class="m">10/15/19</td><td class="k"><i>$</i>3,550.00</td><td></td><td class="k" style="padding-right:4px!important"><i>$</i>(1,150.00)</td><td>Owning</td></tr>
<tr class="n"><td class="m">2</td><td class="f"><i>$</i>3,150.00</td><td class="f"><i>$</i>350.00</td><td class="m">11/23/19</td><td class="k"><i>$</i>3,700.00</td><td></td><td class="k" style="padding-right:4px!important"><i>$</i>(200.00)</td><td>Owning</td></tr>
<tr class="s"><td class="m">1</td><td class="f"><i>$</i>2,050.00</td><td class="f"><i>$</i>550.00</td><td class="m">1/1/20</td><td class="k"><i>$</i>1,200.00</td><td></td><td class="k"><i>$</i>1,400.00</td><td>Owning</td></tr>
<tr class="n"><td class="m">2</td><td class="f"><i>$</i>3,150.00</td><td class="f"><i>$</i>575.00</td><td class="m">2/9/20</td><td class="k"><i>$</i>3,700.00</td><td></td><td class="k"><i>$</i>25.00</td><td>Owning</td></tr>
<tr class="s"><td class="m">3</td><td class="f"><i>$</i>3,150.00</td><td class="f"><i>$</i>575.00</td><td class="m">3/20/20</td><td class="k"><i>$</i>3,700.00</td><td></td><td class="k"><i>$</i>25.00</td><td>Owning</td></tr>
</table>

<!-- Pivot -->
<table class="pv"><colgroup><col style="width:168px"><col style="width:130px"></colgroup>
<tr style="height:28px"><td>Program</td><td>English</td></tr>
<tr style="height:22px"><td>Owing</td><td>Up to Date</td></tr>
<tr style="height:23px"><td>Count of Paid</td><td></td></tr>
<tr style="height:23px"><td>Sum of Paid</td><td></td></tr>
<tr style="height:23px"><td>Average of Paid</td><td></td></tr>
</table>
<div class="a" style="left:1238px;top:649px;width:131px;height:25px;border:2px solid #217346;border-left-width:1px"></div>
<div class="a" style="left:1365px;top:671px;width:5px;height:5px;background:#217346;border:0"></div>

<!-- Tooltip -->
<div class="a" style="left:1390px;top:478px;width:200px;height:52px;border-radius:10px;background:linear-gradient(#2b2b2d,#161618);box-shadow:0 1px 5px rgba(0,0,0,.35);z-index:9"></div>
<svg class="i" style="left:1410px;top:500px;stroke:#b5b5b5;stroke-width:2;z-index:10" width="19" height="11"><path d="M1 1l8.500 8.500L18 1"/></svg>
<div class="t" style="left:1431px;top:494px;font-size:13px;color:#d8d8d8;z-index:10">Talking:</div>
</body></html>
